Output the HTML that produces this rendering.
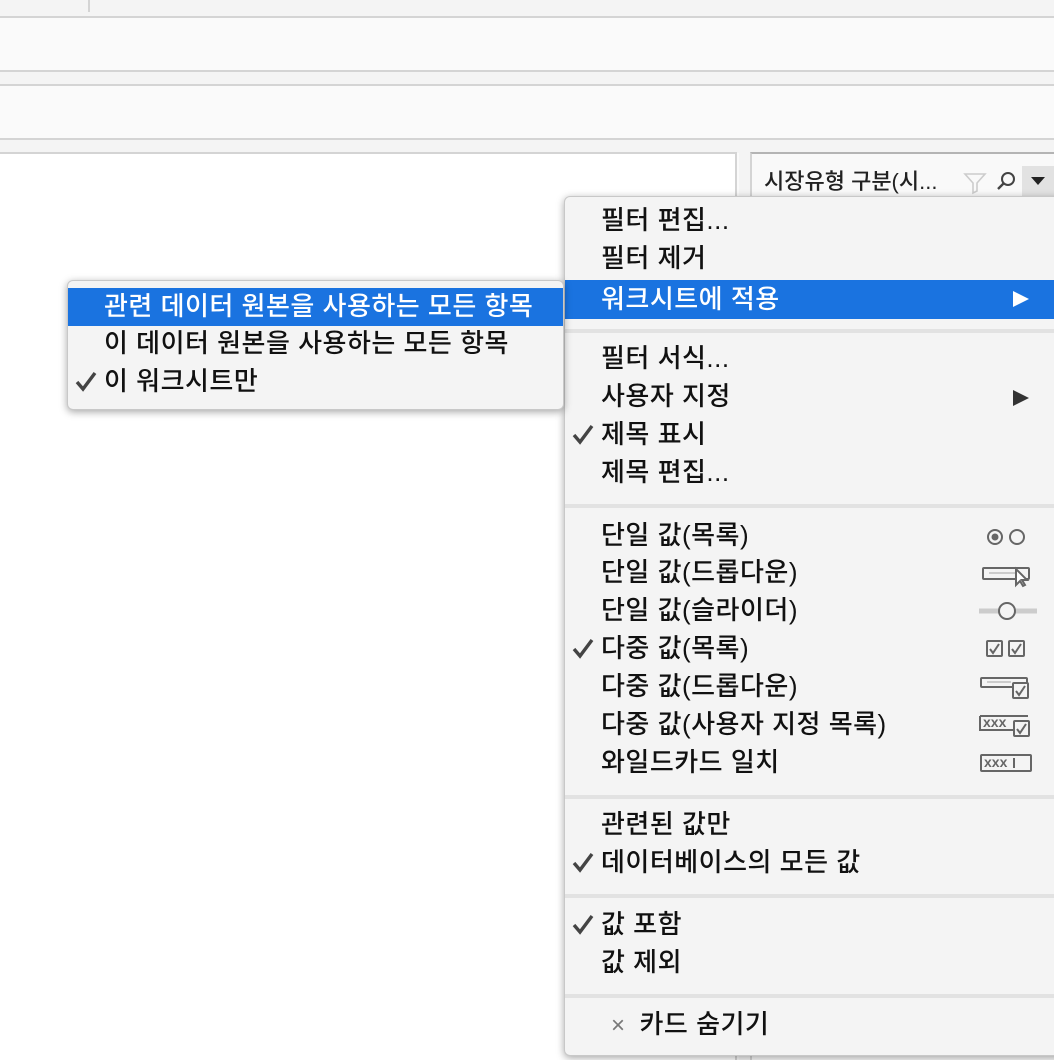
<!DOCTYPE html>
<html><head><meta charset="utf-8"><style>
*{margin:0;padding:0;box-sizing:border-box}
body{width:1054px;height:1060px;overflow:hidden;background:#fafafa;position:relative;font-family:"Liberation Sans","Noto Sans CJK KR","NanumGothic",sans-serif}
.a{position:absolute}
.it{position:absolute;left:36px;height:38px;line-height:38px;font-size:26px;letter-spacing:0.5px;font-weight:500;color:#111;white-space:nowrap}
.ck{position:absolute;left:6px;top:0;width:24px;height:38px}
.sep{position:absolute;left:0;right:0;height:4px;background:#e2e2e2}
</style></head><body>
<div class="a" style="left:0;top:0;width:1054px;height:16px;background:#f4f4f4"></div>
<div class="a" style="left:88px;top:0;width:2px;height:12px;background:#d4d4d4"></div>
<div class="a" style="left:0;top:16px;width:1054px;height:2px;background:#d4d4d4"></div>
<div class="a" style="left:0;top:70px;width:1054px;height:2px;background:#d4d4d4"></div>
<div class="a" style="left:0;top:72px;width:1054px;height:12px;background:#f4f4f4"></div>
<div class="a" style="left:0;top:84px;width:1054px;height:2px;background:#d4d4d4"></div>
<div class="a" style="left:0;top:138px;width:1054px;height:2px;background:#d4d4d4"></div>
<div class="a" style="left:0;top:140px;width:1054px;height:13px;background:#f4f4f4"></div>
<div class="a" style="left:0;top:152px;width:737px;height:908px;background:#fff;border-top:2px solid #d4d4d4;border-right:2px solid #d4d4d4"></div>
<div class="a" style="left:739px;top:152px;width:11px;height:908px;background:#f4f4f4"></div>
<div class="a" style="left:750px;top:152px;width:304px;height:908px;background:#f9f9f9;border-top:2px solid #b4b4b4;border-left:2px solid #d4d4d4"></div>
<div class="a" style="left:764px;top:167px;font-size:22px;line-height:30px;color:#222;font-weight:500">시장유형 구분(시...</div>
<svg class="a" style="left:962px;top:170px" width="26" height="26" viewBox="0 0 26 26"><path d="M3 4h20l-8 9v8l-4 2V13z" fill="none" stroke="#ccc" stroke-width="1.6"/></svg>
<svg class="a" style="left:994px;top:170px" width="24" height="24" viewBox="0 0 24 24"><circle cx="14" cy="9" r="6" fill="none" stroke="#444" stroke-width="2"/><path d="M10 13L4 19" stroke="#444" stroke-width="2.4"/></svg>
<div class="a" style="left:1022px;top:166px;width:32px;height:30px;background:#e2e2e2"></div>
<svg class="a" style="left:1030px;top:176px" width="16" height="10"><path d="M1 1h14l-7 8z" fill="#222"/></svg>

<div class="a" style="left:564px;top:196px;width:500px;height:860px;background:#f4f4f4;border-radius:6px;box-shadow:0 2px 8px rgba(0,0,0,.35);border:1px solid #c8c8c8">
 <div class="it" style="top:4px">필터 편집...</div>
 <div class="it" style="top:42px">필터 제거</div>
 <div class="a" style="left:0;top:83px;width:500px;height:39px;background:#1a73e0"></div>
 <div class="it" style="top:83px;color:#fff">워크시트에 적용</div>
 <svg class="a" style="left:446px;top:92px" width="20" height="20"><path d="M2 2l16 8-16 8z" fill="#fff"/></svg>
 <div class="sep" style="top:132px"></div>
 <div class="it" style="top:142px">필터 서식...</div>
 <div class="it" style="top:180px">사용자 지정</div>
 <svg class="a" style="left:446px;top:191px" width="20" height="20"><path d="M2 2l16 8-16 8z" fill="#333"/></svg>
 <div class="it" style="top:218px"><svg class="ck" style="left:-30px" viewBox="0 0 24 38"><path d="M3 20l6 7L21 11" fill="none" stroke="#444" stroke-width="3.4"/></svg>제목 표시</div>
 <div class="it" style="top:256px">제목 편집...</div>
 <div class="sep" style="top:307px"></div>
 <div class="it" style="top:319px">단일 값(목록)</div>
 <div class="it" style="top:356px">단일 값(드롭다운)</div>
 <div class="it" style="top:394px">단일 값(슬라이더)</div>
 <div class="it" style="top:432px"><svg class="ck" style="left:-30px" viewBox="0 0 24 38"><path d="M3 20l6 7L21 11" fill="none" stroke="#444" stroke-width="3.4"/></svg>다중 값(목록)</div>
 <div class="it" style="top:470px">다중 값(드롭다운)</div>
 <div class="it" style="top:508px">다중 값(사용자 지정 목록)</div>
 <div class="it" style="top:546px">와일드카드 일치</div>
 <svg class="a" style="left:414px;top:324px" width="60" height="460" viewBox="0 0 60 460" fill="none" stroke="#666" stroke-width="2">
  <circle cx="16" cy="16" r="7"/><circle cx="16" cy="16" r="3.5" fill="#666" stroke="none"/><circle cx="38" cy="16" r="7"/>
  <rect x="4" y="47" width="46" height="11" rx="1"/><path d="M10 52h28" stroke="#ccc"/><path d="M37 48v16l4-4 3 5 2-1-3-5h5z" fill="#fff"/>
  <path d="M0 90h58" stroke="#ccc" stroke-width="5"/><circle cx="28" cy="90" r="8" fill="#f4f4f4"/>
  <rect x="8" y="120" width="15" height="15" rx="1"/><path d="M11 128l3 4 6-9"/><rect x="30" y="120" width="15" height="15" rx="1"/><path d="M33 128l3 4 6-9"/>
  <rect x="2" y="157" width="46" height="9" rx="1"/><path d="M8 161h24" stroke="#ccc"/><rect x="34" y="162" width="15" height="15" rx="1" fill="#f4f4f4"/><path d="M37 170l3 4 6-9"/>
  <path d="M1 195h48M1 195v14h34"/><text x="4" y="206" font-size="14" font-weight="bold" fill="#666" stroke="none" font-family="Liberation Sans">xxx</text><rect x="35" y="200" width="15" height="15" rx="1" fill="#f4f4f4"/><path d="M38 208l3 4 6-9"/>
  <rect x="2" y="234" width="50" height="16" rx="1"/><text x="5" y="246" font-size="14" font-weight="bold" fill="#666" stroke="none" font-family="Liberation Sans">xxx</text><path d="M35 237v10"/>
 </svg>
 <div class="sep" style="top:598px"></div>
 <div class="it" style="top:608px">관련된 값만</div>
 <div class="it" style="top:646px"><svg class="ck" style="left:-30px" viewBox="0 0 24 38"><path d="M3 20l6 7L21 11" fill="none" stroke="#444" stroke-width="3.4"/></svg>데이터베이스의 모든 값</div>
 <div class="sep" style="top:697px"></div>
 <div class="it" style="top:708px"><svg class="ck" style="left:-30px" viewBox="0 0 24 38"><path d="M3 20l6 7L21 11" fill="none" stroke="#444" stroke-width="3.4"/></svg>값 포함</div>
 <div class="it" style="top:746px">값 제외</div>
 <div class="sep" style="top:797px"></div>
 <div class="it" style="top:808px;left:46px"><span style="color:#777;font-size:24px;font-weight:400;margin-right:14px">×</span>카드 숨기기</div>
</div>

<div class="a" style="left:67px;top:280px;width:497px;height:130px;background:#f4f4f4;border-radius:6px;box-shadow:0 2px 8px rgba(0,0,0,.35);border:1px solid #c8c8c8">
 <div class="a" style="left:0;top:7px;width:495px;height:38px;background:#1a73e0"></div>
 <div class="it" style="top:6px;color:#fff">관련 데이터 원본을 사용하는 모든 항목</div>
 <div class="it" style="top:43px">이 데이터 원본을 사용하는 모든 항목</div>
 <div class="it" style="top:81px"><svg class="ck" style="left:-30px" viewBox="0 0 24 38"><path d="M3 20l6 7L21 11" fill="none" stroke="#444" stroke-width="3.4"/></svg>이 워크시트만</div>
</div>
</body></html>
